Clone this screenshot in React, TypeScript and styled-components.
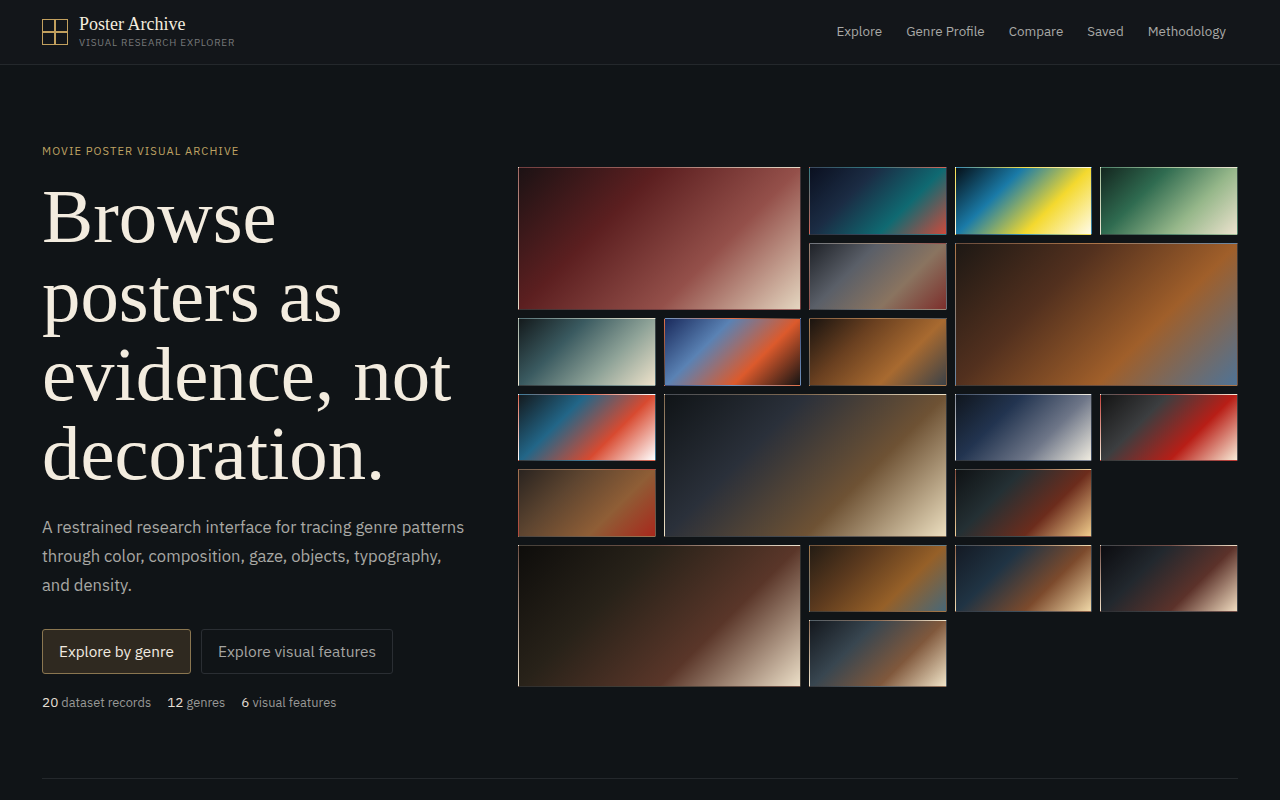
import React from "react";
import styled, { createGlobalStyle } from "styled-components";

const GlobalStyle = createGlobalStyle`
  * { box-sizing: border-box; }
  html, body { margin: 0; padding: 0; background: #101417; overflow: hidden; }
  body { font-family: "IBM Plex Sans", "Liberation Sans", Arial, sans-serif; color: #f2ebe0; }
`;

const Header = styled.header`
  height: 65px;
  padding: 0 42px;
  display: flex;
  align-items: center;
  justify-content: space-between;
  background: #13161a;
  border-bottom: 1px solid #24282c;
`;

const Brand = styled.div`
  display: flex;
  align-items: center;
  gap: 11px;
`;

const BrandText = styled.div`
  display: flex;
  flex-direction: column;
  padding-bottom: 1px;
`;

const BrandName = styled.span`
  font-family: "Liberation Serif", serif;
  font-size: 18px;
  line-height: 20px;
  color: #f3ecdf;
`;

const BrandSub = styled.span`
  margin-top: 2px;
  font-size: 10px;
  line-height: 14px;
  letter-spacing: 0.08em;
  color: #77797b;
`;

const Nav = styled.nav`
  display: flex;
  gap: 24px;
  padding: 0 12px 2px 0;
`;

const NavLink = styled.a`
  font-size: 13.4px;
  color: #a9a9a6;
`;

const Hero = styled.main`
  display: grid;
  grid-template-columns: 428px 720px;
  gap: 48px;
  align-items: center;
  padding: 78px 42px 66px;
`;

const Eyebrow = styled.p`
  margin: 0 0 18px;
  font-size: 11.2px;
  line-height: 16px;
  letter-spacing: 0.095em;
  color: #bfa263;
`;

const Title = styled.h1`
  margin: 0 0 20px;
  font-family: "Liberation Serif", serif;
  font-size: 76.8px;
  font-weight: 400;
  line-height: 79px;
  color: #f3ecdf;
`;

const Lead = styled.p`
  margin: 0 0 29px;
  font-size: 16.6px;
  line-height: 29px;
  color: #a8a8a4;
`;

const Actions = styled.div`
  display: flex;
  gap: 10px;
`;

const Action = styled.a<{ $primary?: boolean }>`
  height: 45px;
  padding: 0 16px 2px;
  display: flex;
  align-items: center;
  font-size: ${(p) => (p.$primary ? "15.3px" : "15.5px")};
  border-radius: 3px;
  border: 1px solid ${(p) => (p.$primary ? "#8a7650" : "#2a2e33")};
  background: ${(p) => (p.$primary ? "#2f2920" : "transparent")};
  color: ${(p) => (p.$primary ? "#f2ebe0" : "#a5a5a2")};
`;

const Stats = styled.div`
  display: flex;
  gap: 16px;
  margin-top: 20px;
  font-size: 12.8px;
  line-height: 17.8px;
  color: #989896;
`;

const StatValue = styled.span`
  color: #e4ded3;
  font-size: 13.6px;
`;

const Mosaic = styled.div`
  display: grid;
  grid-template-columns: repeat(5, 1fr);
  grid-auto-rows: 67.43px;
  gap: 8px;
`;

const Tile = styled.div<{ $stops: string; $large?: boolean }>`
  grid-column: span ${(p) => (p.$large ? 2 : 1)};
  grid-row: span ${(p) => (p.$large ? 2 : 1)};
  border: 1px solid rgba(255, 255, 255, 0.14);
  background: linear-gradient(135deg, ${(p) => p.$stops});
`;

const Rule = styled.div`
  margin: 0 42px;
  border-top: 1px solid #24282c;
  height: 22px;
`;

const tiles: { stops: string; large?: boolean }[] = [
  { stops: "#1c1214, #5c1f20, #94504a, #e4d6c0", large: true },
  { stops: "#0b1020, #1b2c44, #0f6a72, #cc4a3c" },
  { stops: "#061018, #1a7ba8, #f4d92e, #fffbe8" },
  { stops: "#14261f, #2f6b50, #96b78a, #ece2ce" },
  { stops: "#1f2228, #5a5f68, #8a7460, #7d2f2c" },
  { stops: "#1d1814, #52301e, #a05f2a, #4f7396", large: true },
  { stops: "#141a1c, #3a5a60, #8fa398, #eee2ca" },
  { stops: "#1a2a5c, #5a82b4, #dc5a2c, #141414" },
  { stops: "#1a1410, #6a4020, #a86a30, #3c4248" },
  { stops: "#141a1e, #226688, #d84a30, #ffffff" },
  { stops: "#101417, #2a303a, #6e5234, #ecdfc0", large: true },
  { stops: "#10161e, #223450, #6e7688, #f0ece0" },
  { stops: "#141414, #3c3e40, #b81e16, #f8ecd8" },
  { stops: "#2a2420, #5e4530, #8f5e36, #a8281c" },
  { stops: "#0f1214, #243034, #6c2c1c, #f0cc8c" },
  { stops: "#0e0d0b, #282219, #5a3629, #ecdfc8", large: true },
  { stops: "#241c14, #5c3a1e, #966028, #486878" },
  { stops: "#141a24, #203444, #7c4a2c, #f0d8a8" },
  { stops: "#0c0c10, #22282e, #5c322a, #f0dcc0" },
  { stops: "#14181e, #384650, #80583c, #f0e4c8" },
];

const BrandMark = () => (
  <svg width="26" height="26" viewBox="0 0 26 26" fill="none" stroke="#c2a05e" strokeWidth="1">
    <rect x="0.5" y="0.5" width="25" height="25" />
    <path d="M13 0v26M0 13h26" strokeWidth="2" />
  </svg>
);

export default function App() {
  return (
    <>
      <GlobalStyle />
      <Header>
        <Brand>
          <BrandMark />
          <BrandText>
            <BrandName>Poster Archive</BrandName>
            <BrandSub>VISUAL RESEARCH EXPLORER</BrandSub>
          </BrandText>
        </Brand>
        <Nav>
          {["Explore", "Genre Profile", "Compare", "Saved", "Methodology"].map((item) => (
            <NavLink key={item}>{item}</NavLink>
          ))}
        </Nav>
      </Header>
      <Hero>
        <div>
          <Eyebrow>MOVIE POSTER VISUAL ARCHIVE</Eyebrow>
          <Title>Browse posters as evidence, not decoration.</Title>
          <Lead>
            A restrained research interface for tracing genre patterns through color, composition,
            gaze, objects, typography, and density.
          </Lead>
          <Actions>
            <Action $primary>Explore by genre</Action>
            <Action>Explore visual features</Action>
          </Actions>
          <Stats>
            <span><StatValue>20</StatValue> dataset records</span>
            <span><StatValue>12</StatValue> genres</span>
            <span><StatValue>6</StatValue> visual features</span>
          </Stats>
        </div>
        <Mosaic>
          {tiles.map((t, i) => (
            <Tile key={i} $stops={t.stops} $large={t.large} />
          ))}
        </Mosaic>
      </Hero>
      <Rule />
    </>
  );
}
